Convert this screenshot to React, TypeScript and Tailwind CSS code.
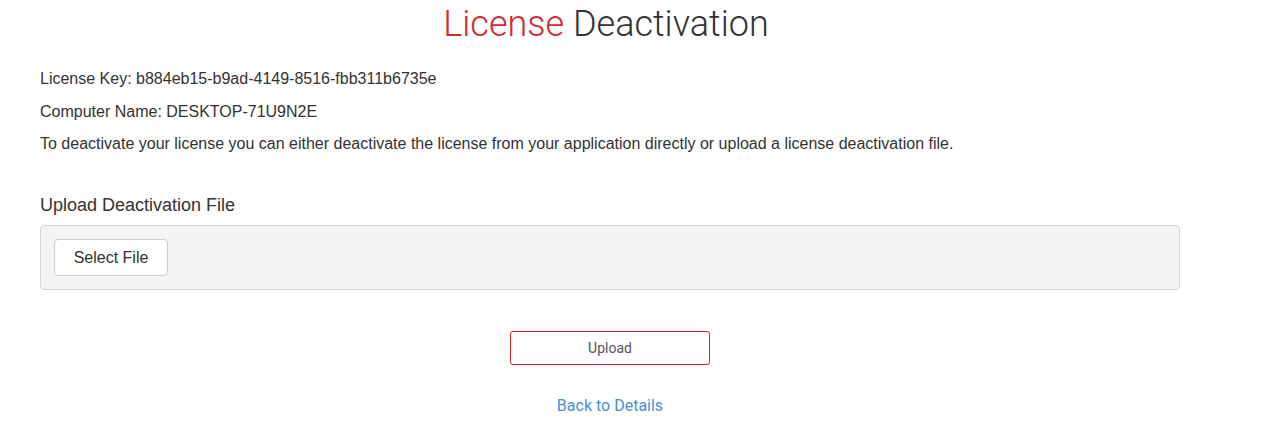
import React from 'react';

const App: React.FC = () => {
  return (
    <div className="min-h-[441px] bg-white px-10 text-[#333]" style={{ fontFamily: '"Liberation Sans", Arial, sans-serif' }}>
      <div className="w-[1140px]">
        <h1 className="pr-[8px] pt-[2px] text-center font-['Roboto',sans-serif] text-[36px] leading-[44px] font-light">
          <span className="text-[#d12a2f]">License</span> <span className="text-[#333]">Deactivation</span>
        </h1>
        <div className="mt-[22px] text-[16px]">
          <p className="mb-[10.5px] leading-[22px]">License Key: b884eb15-b9ad-4149-8516-fbb311b6735e</p>
          <p className="mb-[10.5px] leading-[22px]">Computer Name: DESKTOP-71U9N2E</p>
          <p className="mb-[10px] leading-[22px]">To deactivate your license you can either deactivate the license from your application directly or upload a license deactivation file.</p>
        </div>
        <h2 className="mt-[38px] text-[18px] leading-[24px] text-[#333]">Upload Deactivation File</h2>
        <div className="mt-[8px] h-[65px] rounded border border-[#d4d4d4] bg-[#f4f4f4] p-[13px]">
          <button className="h-[37px] w-[114px] rounded border border-[#ccc] bg-white text-[16px] text-[#333]">Select File</button>
        </div>
        <div className="mt-[41px] flex flex-col items-center font-['Roboto',sans-serif]">
          <button className="h-[34px] w-[200px] rounded-[3px] border border-[#d6222b] bg-white text-[14px] text-[#555]">Upload</button>
          <a className="mt-[29px] text-[16px] leading-[24px] text-[#4a8fd4]">Back to Details</a>
        </div>
      </div>
    </div>
  );
};

export default App;
